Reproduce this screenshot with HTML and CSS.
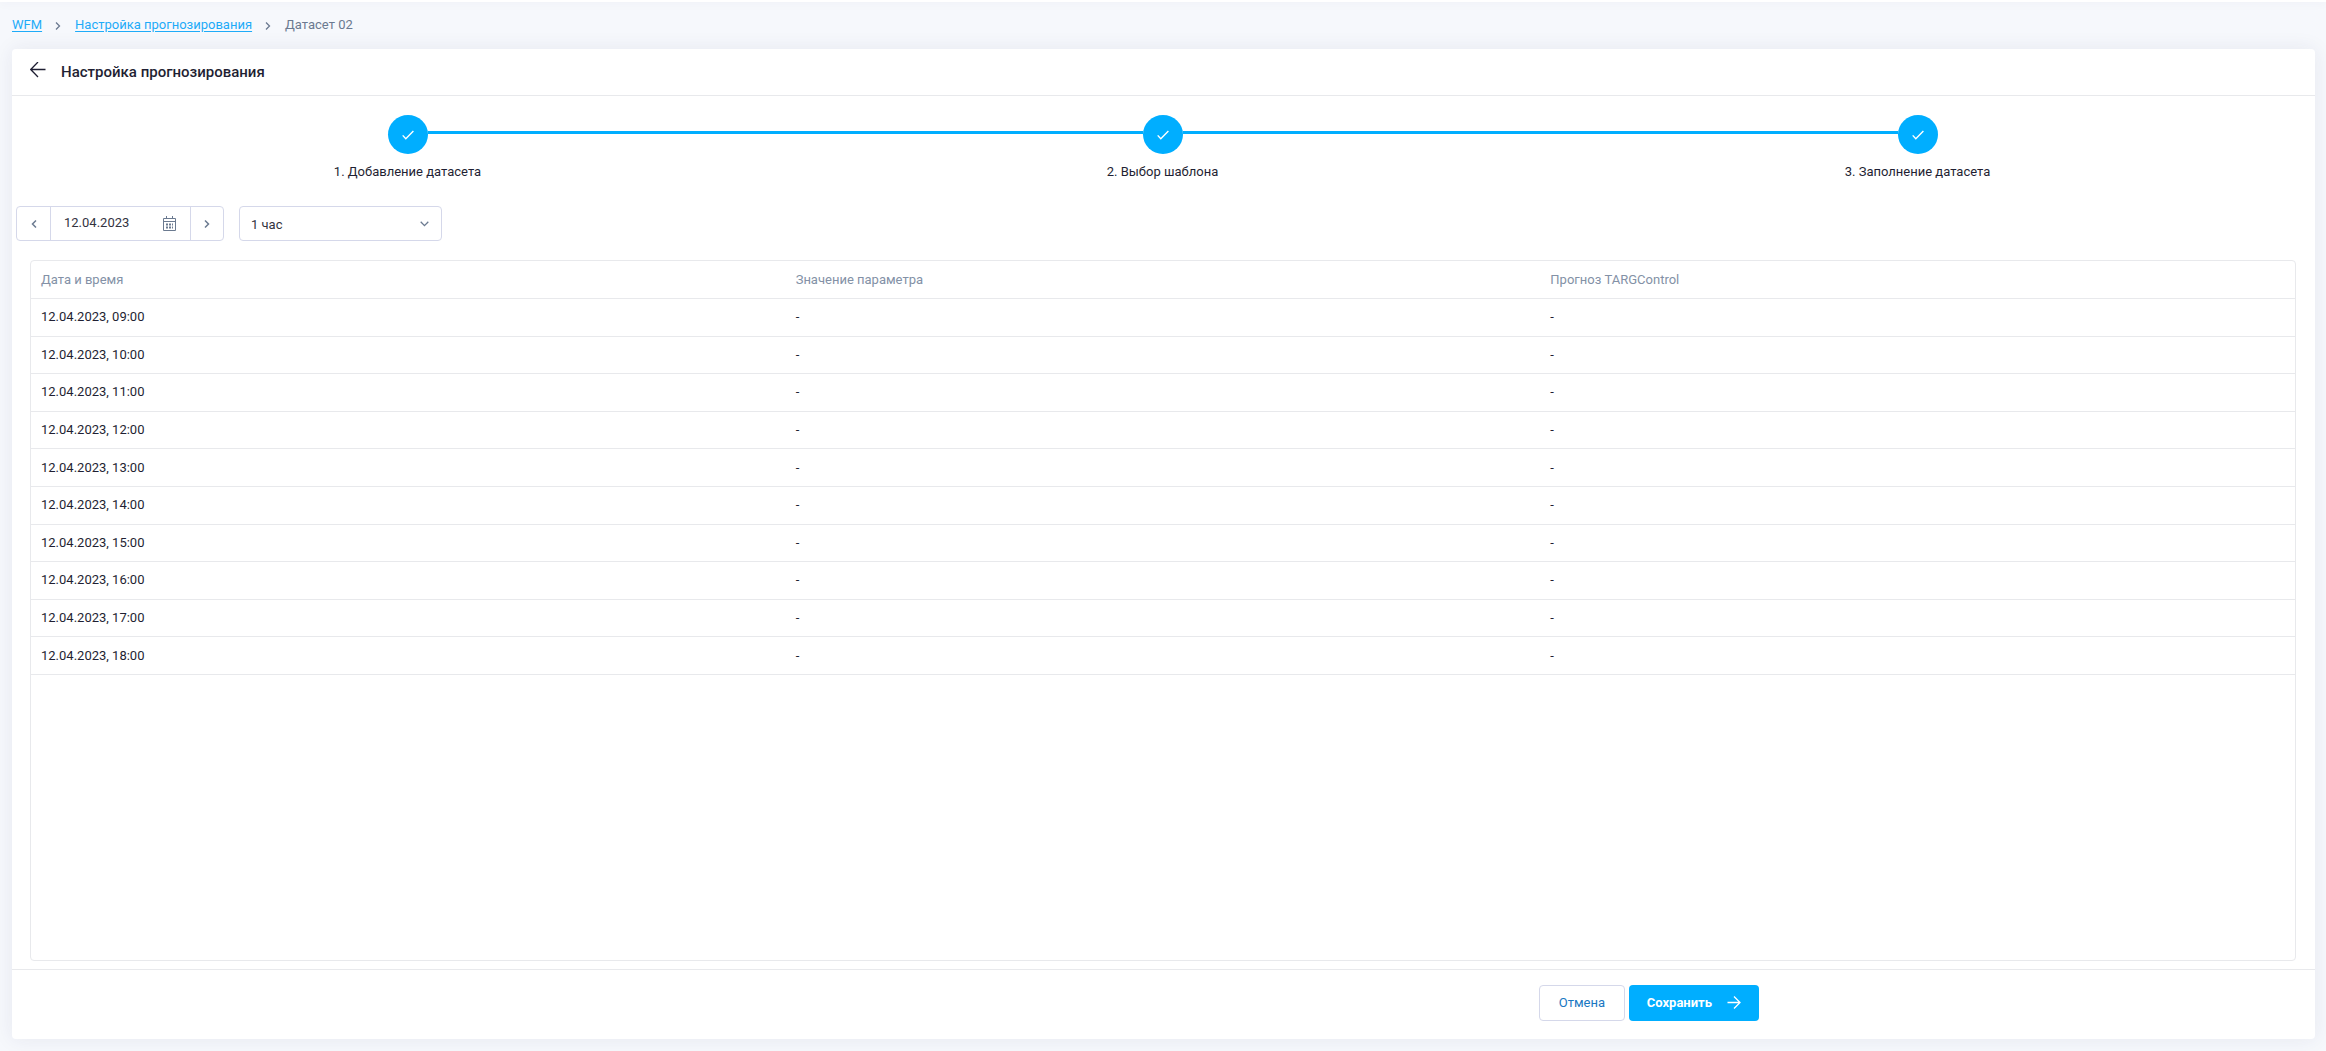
FILE: index.html
```html
<!DOCTYPE html>
<html lang="ru">
<head>
<meta charset="utf-8">
<meta name="viewport" content="width=device-width, initial-scale=1">
<title>Настройка прогнозирования</title>
<link rel="stylesheet" href="styles.css">
</head>
<body>
<div class="topbar"></div>
<nav class="breadcrumbs" aria-label="Навигация">
  <a href="#">WFM</a>
  <svg class="crumb-sep" viewBox="0 0 6 8" width="6" height="8"><path d="M1 .5 4.500 4 1 7.500"/></svg>
  <a href="#">Настройка прогнозирования</a>
  <svg class="crumb-sep" viewBox="0 0 6 8" width="6" height="8"><path d="M1 .5 4.500 4 1 7.500"/></svg>
  <span>Датасет 02</span>
</nav>
<main class="card">
  <header class="card-header">
    <button class="back" type="button" aria-label="Назад"><svg viewBox="0 0 16 16" width="16" height="16"><path d="M15.500 7.500H1M8 0 .7 7.500 8 15"/></svg></button>
    <h1>Настройка прогнозирования</h1>
  </header>
  <ol class="steps">
    <li class="step"><span class="dot"><svg viewBox="0 0 12 10" width="12" height="10"><path d="M.7 5.400 3.800 8.800 11.400.9"/></svg></span><span>1. Добавление датасета</span></li>
    <li class="step"><span class="dot"><svg viewBox="0 0 12 10" width="12" height="10"><path d="M.7 5.400 3.800 8.800 11.400.9"/></svg></span><span>2. Выбор шаблона</span></li>
    <li class="step"><span class="dot"><svg viewBox="0 0 12 10" width="12" height="10"><path d="M.7 5.400 3.800 8.800 11.400.9"/></svg></span><span>3. Заполнение датасета</span></li>
  </ol>
  <div class="filters">
    <div class="date-picker">
      <button class="nav-btn" type="button" aria-label="Предыдущий день"><svg viewBox="0 0 6 8" width="6" height="8"><path d="M5 .5 1.500 4 5 7.500"/></svg></button>
      <input class="date-input" type="text" value="12.04.2023" aria-label="Дата">
      <button class="calendar" type="button" aria-label="Открыть календарь"><svg viewBox="0 0 13 15" width="13" height="15"><path d="M.5 2.500h12v12H.5zM.5 5.500h12M3.500 0v3M9.500 0v3"/><path class="days" d="M3 8.500h7M3 11.500h7"/></svg></button>
      <button class="nav-btn" type="button" aria-label="Следующий день"><svg viewBox="0 0 6 8" width="6" height="8"><path d="M1 .5 4.500 4 1 7.500"/></svg></button>
    </div>
    <div class="select-wrap">
      <select aria-label="Интервал"><option>1 час</option></select>
      <svg class="select-arrow" viewBox="0 0 9 6" width="9" height="6"><path d="M.7.800 4.500 4.600 8.300.8"/></svg>
    </div>
  </div>
  <div class="table-box">
    <table>
      <thead><tr><th scope="col">Дата и время</th><th scope="col">Значение параметра</th><th scope="col">Прогноз TARGControl</th></tr></thead>
      <tbody>
        <tr><td>12.04.2023, 09:00</td><td>-</td><td>-</td></tr>
        <tr><td>12.04.2023, 10:00</td><td>-</td><td>-</td></tr>
        <tr><td>12.04.2023, 11:00</td><td>-</td><td>-</td></tr>
        <tr><td>12.04.2023, 12:00</td><td>-</td><td>-</td></tr>
        <tr><td>12.04.2023, 13:00</td><td>-</td><td>-</td></tr>
        <tr><td>12.04.2023, 14:00</td><td>-</td><td>-</td></tr>
        <tr><td>12.04.2023, 15:00</td><td>-</td><td>-</td></tr>
        <tr><td>12.04.2023, 16:00</td><td>-</td><td>-</td></tr>
        <tr><td>12.04.2023, 17:00</td><td>-</td><td>-</td></tr>
        <tr><td>12.04.2023, 18:00</td><td>-</td><td>-</td></tr>
      </tbody>
    </table>
  </div>
  <footer class="actions">
    <button class="btn" type="button">Отмена</button>
    <button class="btn primary" type="button">Сохранить<svg viewBox="0 0 14 14" width="14" height="14"><path d="M.5 6.500h12.500M7 .5l6 6-6 6"/></svg></button>
  </footer>
</main>
</body>
</html>
```
FILE: styles.css
```css
* { box-sizing: border-box; }
body {
  margin: 0;
  min-height: 100vh;
  display: flex;
  flex-direction: column;
  background: #f6f8fc;
  color: #1f1f33;
  font: 13px/16px Roboto, sans-serif;
}
button, input, select { font: inherit; color: inherit; }
button { border: 0; padding: 0; background: none; cursor: pointer; }
svg { display: block; flex: none; fill: none; stroke: currentColor; }

.topbar { height: 2px; background: #fff; box-shadow: 0 0 10px rgba(40, 40, 90, .1); }
.breadcrumbs {
  display: flex;
  align-items: center;
  height: 47px;
  padding: 0 12px 2px;
  color: #6b7a90;
}
.breadcrumbs a { color: #1eabf8; text-underline-offset: 2px; }
.crumb-sep { margin: 2px 14px 0 13px; stroke-width: 1.3; }

.card {
  flex: 1;
  display: flex;
  flex-direction: column;
  margin: 0 11px 12px 12px;
  background: #fff;
  border-radius: 4px;
  box-shadow: 0 0 20px rgba(40, 40, 90, .08);
}
.card-header {
  display: flex;
  align-items: center;
  gap: 15px;
  height: 47px;
  padding: 0 18px;
  border-bottom: 1px solid #e8e9ec;
}
.back { padding-bottom: 4px; stroke-width: 1.3; }
h1 { margin: 0; font-size: 15px; font-weight: 500; line-height: 20px; }

.steps {
  display: grid;
  grid-template-columns: repeat(3, 1fr);
  margin: 0;
  padding: 19px 20px 0 18px;
  list-style: none;
}
.step {
  display: grid;
  grid-template-columns: 1fr auto 1fr;
  row-gap: 10px;
  align-items: center;
  text-align: center;
}
.step > span:last-child { grid-column: 1 / -1; grid-row: 2; }
.dot {
  grid-column: 2;
  display: flex;
  align-items: center;
  justify-content: center;
  width: 40px;
  height: 39px;
  border-radius: 50%;
  background: #00aeff;
  color: #fff;
}
.dot svg { stroke-width: 1.4; }
.step::before, .step::after { content: ""; grid-row: 1; height: 3px; margin-bottom: 4px; }
.step::before { grid-column: 1; }
.step::after { grid-column: 3; }
.step + .step::before, .step:not(:last-child)::after { background: #00aeff; }

.filters { display: flex; gap: 15px; padding: 26px 4px 0; }
.date-picker, .select-wrap { height: 35px; border: 1px solid #d5d8ea; border-radius: 4px; }
.date-picker { display: flex; width: 208px; color: #6b7a90; }
.nav-btn { display: flex; flex: none; align-items: center; justify-content: center; width: 33px; stroke-width: 1.5; }
.nav-btn:last-child { width: 32px; }
.date-input {
  flex: 1;
  min-width: 0;
  padding: 0 0 2px 13px;
  border: 0;
  border-left: 1px solid #d5d8ea;
  background: none;
  color: #33333f;
}
.calendar { padding: 0 14px 0 0; border-right: 1px solid #d5d8ea; }
.days { stroke-width: 2; stroke-dasharray: 2 1; }
.select-wrap { position: relative; width: 203px; }
select {
  appearance: none;
  width: 100%;
  height: 100%;
  padding: 3px 30px 0 11px;
  border: 0;
  background: none;
  color: #33333f;
}
.select-arrow { position: absolute; top: 14px; right: 12px; color: #6b7a90; stroke-width: 1.3; pointer-events: none; }

.table-box { flex: 1; margin: 19px 19px 8px 18px; border: 1px solid #e8e9ec; border-radius: 4px; }
table { width: 100%; height: 414px; table-layout: fixed; border-collapse: separate; border-spacing: 0; }
th, td { padding: 0 10px; border-bottom: 1px solid #e8e9ec; text-align: left; font-weight: 400; }
th { height: 38px; color: #8391a6; }

.actions {
  display: flex;
  gap: 4px;
  height: 70px;
  padding: 15px 0 0 66.3%;
  border-top: 1px solid #e8e9ec;
}
.btn {
  display: flex;
  align-items: center;
  justify-content: center;
  gap: 15px;
  width: 86px;
  height: 36px;
  border: 1px solid #d5d8ea;
  border-radius: 4px;
  color: #1a78c2;
}
.primary { width: 130px; border: 0; background: #00aeff; color: #fff; font-weight: 700; }
.primary svg { stroke-width: 1.3; }
```
